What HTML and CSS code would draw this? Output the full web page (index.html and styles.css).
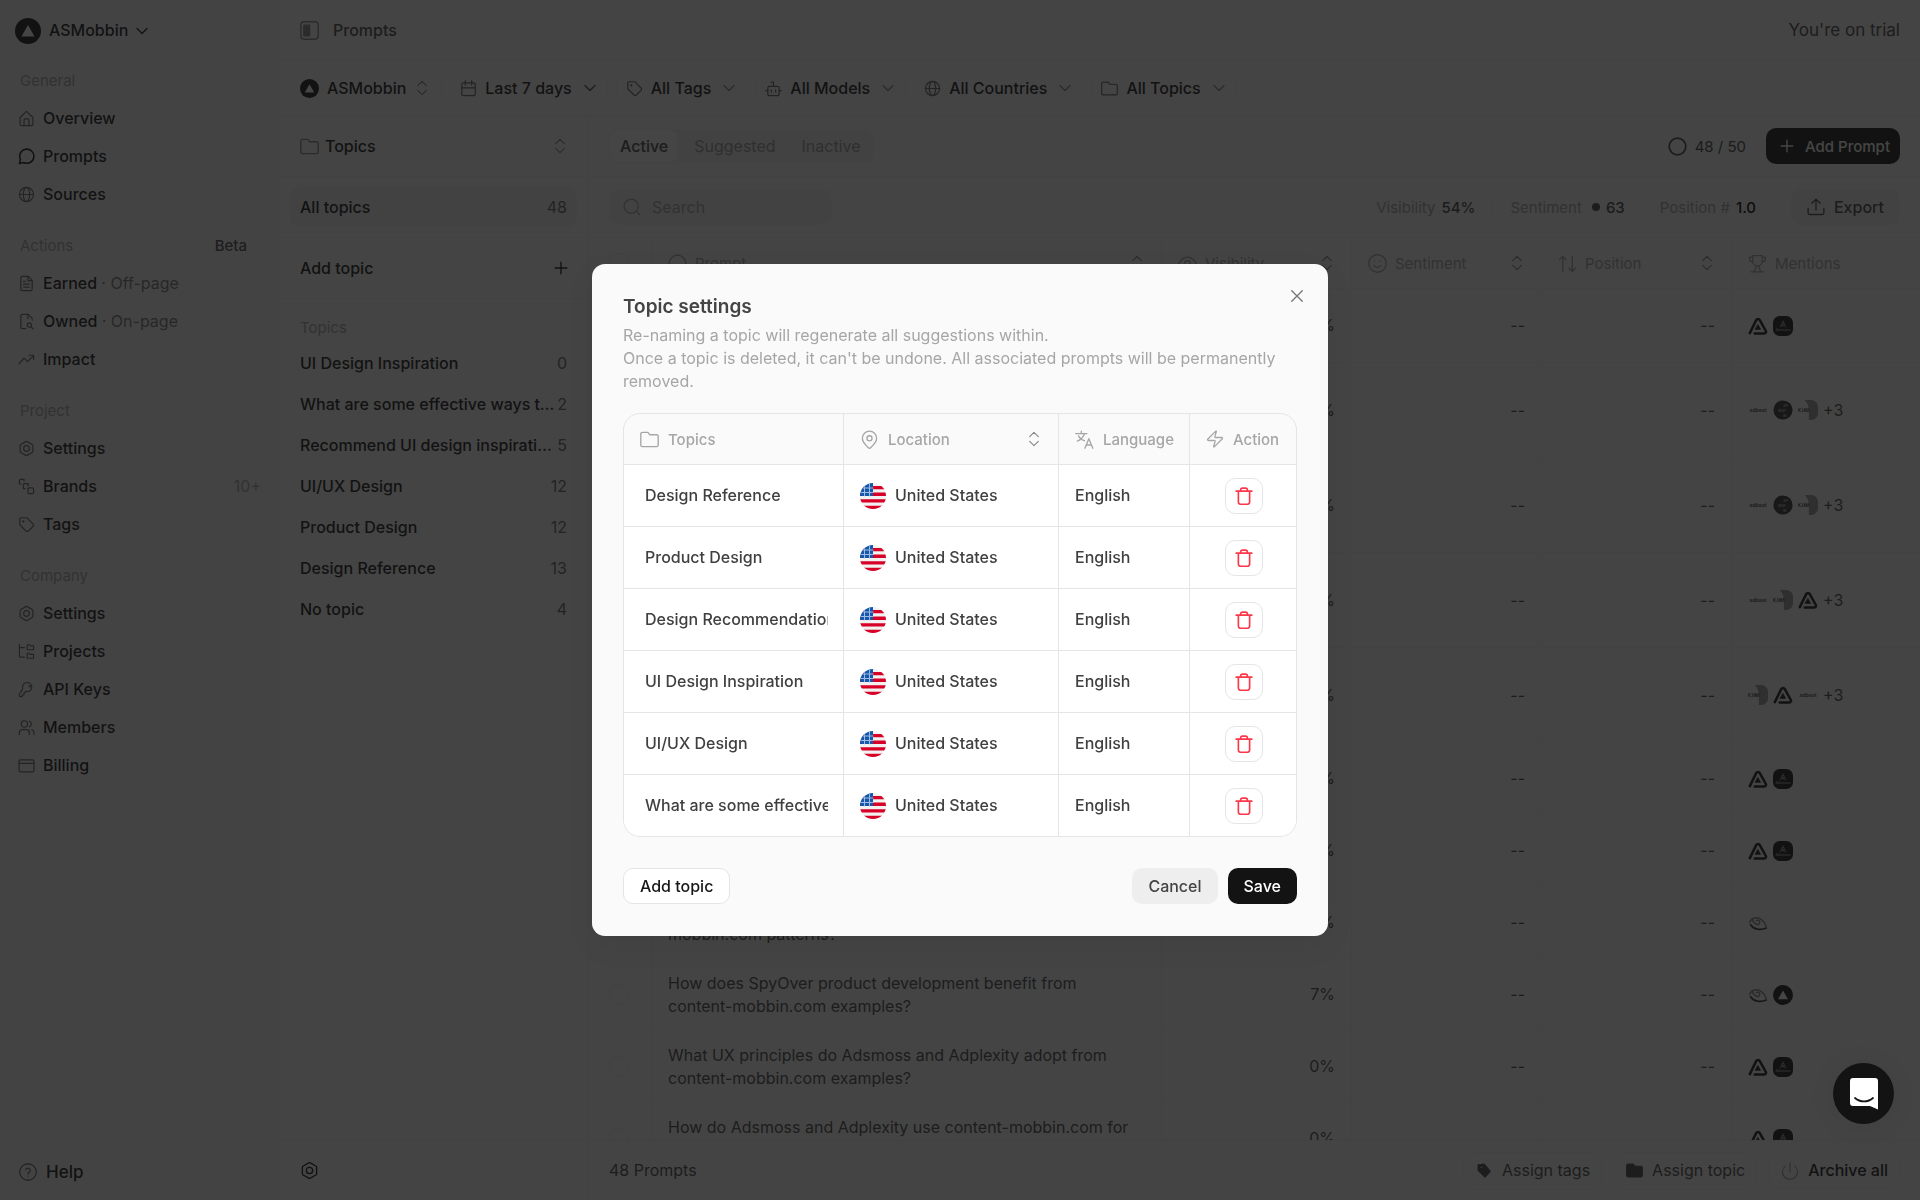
FILE: index.html
```html
<!DOCTYPE html>
<html lang="en">
<head>
<meta charset="utf-8">
<meta name="viewport" content="width=device-width, initial-scale=1">
<title>Prompts</title>
<link rel="stylesheet" href="styles.css">
</head>
<body>
<svg class="sprite" aria-hidden="true">
  <symbol id="home" viewBox="0 0 24 24"><path d="M3 10.500 12 2l9 8.500V20a2 2 0 0 1-2 2H5a2 2 0 0 1-2-2z"/><path d="M8.500 22v-8a1.500 1.500 0 0 1 1.500-1.500h4a1.500 1.500 0 0 1 1.500 1.500v8"/></symbol>
  <symbol id="chat" viewBox="0 0 24 24"><path d="M7.900 20.500A10 10 0 1 0 3.500 16.100L2 22z"/></symbol>
  <symbol id="globe" viewBox="0 0 24 24"><circle cx="12" cy="12" r="10"/><ellipse cx="12" cy="12" rx="4.500" ry="10"/><path d="M2 12h20"/></symbol>
  <symbol id="doc" viewBox="0 0 24 24"><path d="M14.500 2H6a2 2 0 0 0-2 2v16a2 2 0 0 0 2 2h12a2 2 0 0 0 2-2V7.500z"/><path d="M14 2v6h6M8 9h2M8 13h8M8 17h8"/></symbol>
  <symbol id="doc-search" viewBox="0 0 24 24"><path d="M20 10V7.500L14.500 2H6a2 2 0 0 0-2 2v16a2 2 0 0 0 2 2h5"/><path d="M14 2v6"/><circle cx="16" cy="17" r="3"/><path d="m18.300 19.300 3 3"/></symbol>
  <symbol id="trend" viewBox="0 0 24 24"><path d="m1.500 18 7-8 5 5L22 6.500"/><path d="M15.500 6H22v6.500"/></symbol>
  <symbol id="nut" viewBox="0 0 24 24"><path d="M21 16V8a2 2 0 0 0-1-1.700l-7-4a2 2 0 0 0-2 0l-7 4A2 2 0 0 0 3 8v8a2 2 0 0 0 1 1.700l7 4a2 2 0 0 0 2 0l7-4a2 2 0 0 0 1-1.700z"/><circle cx="12" cy="12" r="4"/></symbol>
  <symbol id="brands" viewBox="0 0 24 24"><rect x="14" y="14" width="8" height="8" rx="1.500"/><path d="M7.500 15V9.500A1.500 1.500 0 0 1 9 8h5.500M7.500 15H10M2 8.500v-5A1.500 1.500 0 0 1 3.500 2h5M2 8.500h2.500M8.500 2v2.500M14.500 8v3"/></symbol>
  <symbol id="tag" viewBox="0 0 24 24"><path d="M2.500 4v7.600a2 2 0 0 0 .6 1.400l8.200 8.200a2.400 2.400 0 0 0 3.400 0l6.500-6.500a2.400 2.400 0 0 0 0-3.400L13 3.100a2 2 0 0 0-1.400-.6H4A1.500 1.500 0 0 0 2.500 4z"/><circle cx="7.500" cy="7.500" r=".8" fill="currentColor"/></symbol>
  <symbol id="tag-solid" viewBox="0 0 24 24"><path fill="currentColor" fill-rule="evenodd" d="M3 4v7.600l9.700 9.600 7.500-7.900L11.600 3zM7.500 5.700a1.800 1.800 0 1 1 0 3.600 1.800 1.800 0 0 1 0-3.600z"/></symbol>
  <symbol id="tree" viewBox="0 0 24 24"><path d="M2 2v16a2 2 0 0 0 2 2h5M2 6.500h7"/><path d="M13 9.500v-7h3l1.500 1.500H22v5.500zM13 21.500v-7h3l1.500 1.500H22v5.500z"/></symbol>
  <symbol id="key" viewBox="0 0 24 24"><path d="M2.600 17.400A2 2 0 0 0 2 18.800V21a1 1 0 0 0 1 1h3v-2.500h2.500V17l2.300-2.300a6.500 6.500 0 1 0-4-4z"/><circle cx="16.500" cy="7.500" r=".8" fill="currentColor"/></symbol>
  <symbol id="users" viewBox="0 0 24 24"><circle cx="9" cy="7" r="4.500"/><path d="M2 22v-3a4 4 0 0 1 4-4h6a4 4 0 0 1 4 4v3M16 2.800a4.500 4.500 0 0 1 0 8.400M22.500 22v-3a4 4 0 0 0-3-3.900"/></symbol>
  <symbol id="card" viewBox="0 0 24 24"><rect x="1.500" y="4" width="21" height="17" rx="2"/><path d="M1.500 9h21"/></symbol>
  <symbol id="help" viewBox="0 0 24 24"><circle cx="12" cy="12" r="11"/><path d="M9 9a3.100 3.100 0 0 1 6 1c0 2-3 2.700-3 4.500"/><path d="M12 17.500v.1"/></symbol>
  <symbol id="down" viewBox="0 0 24 24"><path d="m2 7 10 10 10-10"/></symbol>
  <symbol id="sort" viewBox="0 0 24 24"><path d="m5.500 8.500 6.500-6.500 6.500 6.500M5.500 15.500l6.500 6.500 6.500-6.500"/></symbol>
  <symbol id="calendar" viewBox="0 0 24 24"><rect x="2.500" y="4" width="19" height="18" rx="2"/><path d="M7.500 1v6M16.500 1v6M2.500 11h19"/></symbol>
  <symbol id="bot" viewBox="0 0 24 24"><rect x="4" y="9" width="16" height="13" rx="2"/><path d="M12 9V3H8.500M1 15h3M20 15h3M9 14v3M15 14v3"/></symbol>
  <symbol id="folder" viewBox="0 0 24 24"><path d="M21 21a2 2 0 0 0 2-2V8a2 2 0 0 0-2-2h-8.500L10 3H3a2 2 0 0 0-2 2v14a2 2 0 0 0 2 2z"/></symbol>
  <symbol id="plus" viewBox="0 0 24 24"><path d="M12 2v20M2 12h20"/></symbol>
  <symbol id="search" viewBox="0 0 24 24"><circle cx="11" cy="11" r="9.500"/><path d="m18 18 4.500 4.500"/></symbol>
  <symbol id="upload" viewBox="0 0 24 24"><path d="M1.500 14v6a2 2 0 0 0 2 2h17a2 2 0 0 0 2-2v-6M6.500 7 12 1.500 17.500 7M12 1.500V16"/></symbol>
  <symbol id="smile" viewBox="0 0 24 24"><circle cx="12" cy="12" r="11"/><path d="M7.500 14.500a5.500 5.500 0 0 0 9 0M8.500 8.500v.2M15.500 8.500v.2"/></symbol>
  <symbol id="updown" viewBox="0 0 24 24"><path d="M6 22V3M2 7l4-4 4 4M18 3v19M14 18l4 4 4-4"/></symbol>
  <symbol id="trophy" viewBox="0 0 24 24"><path d="M6 2h12v7a6 6 0 0 1-12 0zM6 4H2v2a4 4 0 0 0 4 4M18 4h4v2a4 4 0 0 1-4 4M10.500 15 8 22.500M13.500 15l2.500 7.500M4 22.500h16"/></symbol>
  <symbol id="eye" viewBox="0 0 24 24"><path d="M1 12S5 4 12 4s11 8 11 8-4 8-11 8S1 12 1 12z"/><circle cx="12" cy="12" r="3.500"/></symbol>
  <symbol id="pin" viewBox="0 0 24 24"><path d="M21 10.500c0 5.500-5.500 10-8 12.200a1.500 1.500 0 0 1-2 0C8.500 20.500 3 16 3 10.500a9 9 0 0 1 18 0z"/><circle cx="12" cy="10.500" r="3.200"/></symbol>
  <symbol id="lang" viewBox="0 0 24 24"><path d="M1 4.500h14M8 1.500v3M12 4.500c-1.500 4.500-5 8-9 9.500M4.500 7.500c1.500 3 4 5 7.500 6M12.500 23l5-12 5 12M14.500 19h6"/></symbol>
  <symbol id="zap" viewBox="0 0 24 24"><path d="M3 14a1 1 0 0 1-.8-1.600L13 1.500c.3-.3.900 0 .8.500l-2 6.800A1 1 0 0 0 12.800 10H21a1 1 0 0 1 .8 1.600L11 22.500c-.3.300-.9 0-.8-.5l2-6.800a1 1 0 0 0-1-1.200z"/></symbol>
  <symbol id="trash" viewBox="0 0 24 24"><path d="M1.500 5.500h21M4.500 5.500V20a3 3 0 0 0 3 3h9a3 3 0 0 0 3-3V5.500M7.500 5.500V4a2.500 2.500 0 0 1 2.500-2.500h4A2.500 2.500 0 0 1 16.500 4v1.500"/></symbol>
  <symbol id="close" viewBox="0 0 24 24"><path d="M3 3l18 18M21 3 3 21"/></symbol>
  <symbol id="power" viewBox="0 0 24 24"><path d="M12 1v12M18.500 5.500a10 10 0 1 1-13 0"/></symbol>
  <symbol id="panel" viewBox="0 0 24 24"><rect x="1" y="1" width="22" height="22" rx="4"/><rect x="4" y="4.500" width="9" height="15" rx="1.500" fill="currentColor" stroke="none"/></symbol>
  <symbol id="ring" viewBox="0 0 24 24"><circle cx="12" cy="12" r="10.500"/></symbol>
  <symbol id="as" viewBox="0 0 24 24"><circle cx="12" cy="12" r="12" fill="#171717" stroke="none"/><path d="M12 6.500 18 17H6z" fill="#fff" stroke="none"/></symbol>
  <symbol id="tri" viewBox="0 0 24 24"><path d="M2.200 20.500 9.800 5a2.500 2.500 0 0 1 4.400 0l7.200 13a2 2 0 0 1-1.800 3H8" fill="none" stroke="#171717" stroke-width="3"/><path d="M12 10.500 15 16H9z" fill="#171717" stroke="#171717" stroke-width="1"/></symbol>
  <symbol id="moss" viewBox="0 0 24 24"><rect width="24" height="24" rx="8" fill="#171717" stroke="none"/><path d="M9 13 12 6l3 7M11 12l1-2 1 2" stroke="#888" stroke-width="1.300"/><text x="12" y="18.500" class="tiny" fill="#999" font-size="4">Adsmoss</text></symbol>
  <symbol id="beat" viewBox="0 0 24 24"><text x="12" y="14.500" class="tiny" fill="#555" font-size="6">adbeat</text></symbol>
  <symbol id="may" viewBox="0 0 24 24"><circle cx="12" cy="12" r="11.500" fill="#333" stroke="none"/><g class="tiny" fill="#aaa" font-size="4"><text x="15" y="8">AP</text><text x="11" y="14">MAY</text><text x="14" y="20">IN</text></g></symbol>
  <symbol id="half" viewBox="0 0 24 24"><path d="M8 0h8a8 8 0 0 1 8 8v8a8 8 0 0 1-8 8h-3V12C13 7 11 3 8 0z" fill="#999" stroke="none"/><path d="M1 14v-4M1 12l2.500-2M1 12l2.500 2M5 14l1-4M7 14l1.500-4v4l2-4v4M11.500 14l1-4 1 4" stroke="#555" stroke-width="1"/></symbol>
  <symbol id="spy" viewBox="0 0 24 24"><path d="M2 11c2-5 9-7 14-3 2 1.500 4 3 6 8M5 7c2 7 9 9 9 4 0-2-2-3-4-2" stroke="#888" stroke-width="1.800"/><path d="M3 14c4 6 12 7 19 4" stroke="#333" stroke-width="2"/></symbol>
  <symbol id="flag" viewBox="0 0 26 26"><clipPath id="fc"><circle cx="13" cy="13" r="13"/></clipPath><g clip-path="url(#fc)" stroke="none"><rect width="26" height="26" fill="#f1f1f1"/><path d="M0 3h26v3.300H0zM0 9.600h26v3.300H0zM0 16.200h26v3.300H0zM0 22.800h26V26H0z" fill="#d80027"/><rect width="13" height="13" fill="#1457ad"/><path d="M4.500 0v13M9.500 0v13M0 5h13M0 9.500h13" stroke="#a9c4e6" stroke-width="1" stroke-dasharray="1.500 1"/></g></symbol>
</svg>

<div class="app">
  <aside class="sidebar">
    <button class="account"><svg class="i26"><use href="#as"/></svg>ASMobbin<svg class="i12"><use href="#down"/></svg></button>
    <nav>
      <section><h2>General</h2>
        <a href="#"><svg><use href="#home"/></svg>Overview</a>
        <a href="#" class="on"><svg><use href="#chat"/></svg>Prompts</a>
        <a href="#"><svg><use href="#globe"/></svg>Sources</a></section>
      <section><h2>Actions <span>Beta</span></h2>
        <a href="#"><svg><use href="#doc"/></svg><span>Earned <em>· Off-page</em></span></a>
        <a href="#"><svg><use href="#doc-search"/></svg><span>Owned <em>· On-page</em></span></a>
        <a href="#"><svg><use href="#trend"/></svg>Impact</a></section>
      <section><h2>Project</h2>
        <a href="#"><svg><use href="#nut"/></svg>Settings</a>
        <a href="#"><svg><use href="#brands"/></svg>Brands<small>10+</small></a>
        <a href="#"><svg><use href="#tag"/></svg>Tags</a></section>
      <section><h2>Company</h2>
        <a href="#"><svg><use href="#nut"/></svg>Settings</a>
        <a href="#"><svg><use href="#tree"/></svg>Projects</a>
        <a href="#"><svg><use href="#key"/></svg>API Keys</a>
        <a href="#"><svg><use href="#users"/></svg>Members</a>
        <a href="#"><svg><use href="#card"/></svg>Billing</a></section>
    </nav>
    <a href="#" class="help"><svg class="i18"><use href="#help"/></svg>Help</a>
  </aside>

  <div class="page">
    <header class="topbar"><svg class="i20"><use href="#panel"/></svg><h1>Prompts</h1><span class="trial">You're on trial</span></header>
    <div class="filters">
      <button><svg class="i20"><use href="#as"/></svg>ASMobbin<svg class="sort"><use href="#sort"/></svg></button>
      <button><svg><use href="#calendar"/></svg>Last 7 days<svg class="i12 dark"><use href="#down"/></svg></button>
      <button><svg><use href="#tag"/></svg>All Tags<svg class="i12"><use href="#down"/></svg></button>
      <button><svg><use href="#bot"/></svg>All Models<svg class="i12"><use href="#down"/></svg></button>
      <button><svg><use href="#globe"/></svg>All Countries<svg class="i12"><use href="#down"/></svg></button>
      <button><svg><use href="#folder"/></svg>All Topics<svg class="i12"><use href="#down"/></svg></button>
    </div>
    <div class="body">
      <section class="topics">
        <button class="bar topics-head"><svg class="i20"><use href="#folder"/></svg>Topics<svg class="sort"><use href="#sort"/></svg></button>
        <div class="bar all-wrap"><a href="#" class="all">All topics<span>48</span></a></div>
        <button class="bar add">Add topic<svg class="i14"><use href="#plus"/></svg></button>
        <h2>Topics</h2>
        <ul>
          <li><a href="#"><b>UI Design Inspiration</b><span>0</span></a></li>
          <li><a href="#"><b>What are some effective ways to find</b><span>2</span></a></li>
          <li><a href="#"><b>Recommend UI design inspiration</b><span>5</span></a></li>
          <li><a href="#"><b>UI/UX Design</b><span>12</span></a></li>
          <li><a href="#"><b>Product Design</b><span>12</span></a></li>
          <li><a href="#"><b>Design Reference</b><span>13</span></a></li>
          <li><a href="#"><b>No topic</b><span>4</span></a></li>
        </ul>
        <footer><button aria-label="Topic settings"><svg class="i20"><use href="#nut"/></svg></button></footer>
      </section>

      <main class="prompts">
        <div class="bar">
          <div class="tabs"><button class="on">Active</button><button>Suggested</button><button>Inactive</button></div>
          <span class="quota"><svg class="i20"><use href="#ring"/></svg>48 / 50</span>
          <button class="add-prompt"><svg class="i14"><use href="#plus"/></svg>Add Prompt</button>
        </div>
        <div class="bar">
          <label class="search"><svg class="i18"><use href="#search"/></svg><input type="search" placeholder="Search" aria-label="Search"></label>
          <div class="stats"><span>Visibility <b>54%</b></span><span>Sentiment <i></i><b>63</b></span><span>Position # <b class="ink">1.0</b></span></div>
          <button class="export"><svg class="i18"><use href="#upload"/></svg>Export</button>
        </div>
        <div class="scroller">
          <table class="list">
            <colgroup><col class="c-check"><col><col class="c-num"><col class="c-num"><col class="c-num"><col class="c-last"></colgroup>
            <thead><tr>
              <th><input type="checkbox" aria-label="Select all"></th>
              <th><div><svg class="i20"><use href="#ring"/></svg>Prompt<svg class="sort"><use href="#sort"/></svg></div></th>
              <th><div><svg class="i20"><use href="#eye"/></svg>Visibility<svg class="sort"><use href="#sort"/></svg></div></th>
              <th><div><svg class="i20"><use href="#smile"/></svg>Sentiment<svg class="sort"><use href="#sort"/></svg></div></th>
              <th><div><svg class="i20"><use href="#updown"/></svg>Position<svg class="sort"><use href="#sort"/></svg></div></th>
              <th><div><svg class="i20"><use href="#trophy"/></svg>Mentions</div></th>
            </tr></thead>
            <tbody>
              <tr><td></td><td></td><td>0%</td><td>--</td><td>--</td><td><div><svg><use href="#tri"/></svg><svg><use href="#moss"/></svg></div></td></tr>
              <tr class="tall"><td></td><td></td><td>0%</td><td>--</td><td>--</td><td><div><svg><use href="#beat"/></svg><svg><use href="#may"/></svg><svg><use href="#half"/></svg>+3</div></td></tr>
              <tr class="tall"><td></td><td></td><td>0%</td><td>--</td><td>--</td><td><div><svg><use href="#beat"/></svg><svg><use href="#may"/></svg><svg><use href="#half"/></svg>+3</div></td></tr>
              <tr class="tall"><td></td><td></td><td>0%</td><td>--</td><td>--</td><td><div><svg><use href="#beat"/></svg><svg><use href="#half"/></svg><svg><use href="#tri"/></svg>+3</div></td></tr>
              <tr class="tall"><td></td><td></td><td>0%</td><td>--</td><td>--</td><td><div><svg><use href="#half"/></svg><svg><use href="#tri"/></svg><svg><use href="#beat"/></svg>+3</div></td></tr>
              <tr><td></td><td></td><td>0%</td><td>--</td><td>--</td><td><div><svg><use href="#tri"/></svg><svg><use href="#moss"/></svg></div></td></tr>
              <tr><td></td><td></td><td>0%</td><td>--</td><td>--</td><td><div><svg><use href="#tri"/></svg><svg><use href="#moss"/></svg></div></td></tr>
              <tr><td></td><td><br>mobbin.com patterns?</td><td>0%</td><td>--</td><td>--</td><td><div><svg><use href="#spy"/></svg></div></td></tr>
              <tr><td><input type="checkbox" aria-label="Select prompt"></td><td>How does SpyOver product development benefit from<br>content-mobbin.com examples?</td><td>7%</td><td>--</td><td>--</td><td><div><svg><use href="#spy"/></svg><svg><use href="#as"/></svg></div></td></tr>
              <tr><td><input type="checkbox" aria-label="Select prompt"></td><td>What UX principles do Adsmoss and Adplexity adopt from<br>content-mobbin.com examples?</td><td>0%</td><td>--</td><td>--</td><td><div><svg><use href="#tri"/></svg><svg><use href="#moss"/></svg></div></td></tr>
              <tr><td><input type="checkbox" aria-label="Select prompt"></td><td>How do Adsmoss and Adplexity use content-mobbin.com for<br>&nbsp;</td><td>0%</td><td></td><td></td><td><div><svg><use href="#tri"/></svg><svg><use href="#moss"/></svg></div></td></tr>
            </tbody>
          </table>
        </div>
        <footer><span>48 Prompts</span>
          <button><svg><use href="#tag-solid"/></svg>Assign tags</button>
          <button class="solid"><svg><use href="#folder"/></svg>Assign topic</button>
          <button class="archive"><svg class="i18"><use href="#power"/></svg>Archive all</button>
        </footer>
      </main>
    </div>
  </div>
</div>

<div class="overlay">
  <div class="modal" role="dialog" aria-modal="true" aria-labelledby="modal-title">
    <button class="close" aria-label="Close"><svg class="i14"><use href="#close"/></svg></button>
    <h2 id="modal-title">Topic settings</h2>
    <p>Re-naming a topic will regenerate all suggestions within.<br>Once a topic is deleted, it can't be undone. All associated prompts will be permanently removed.</p>
    <table class="grid">
      <colgroup><col class="g-topic"><col><col class="g-lang"><col class="g-act"></colgroup>
      <thead><tr>
        <th><div><svg class="i20"><use href="#folder"/></svg>Topics</div></th>
        <th><div><svg class="i20"><use href="#pin"/></svg>Location<svg class="sort"><use href="#sort"/></svg></div></th>
        <th><div><svg class="i20"><use href="#lang"/></svg>Language</div></th>
        <th><div><svg class="i18"><use href="#zap"/></svg>Action</div></th>
      </tr></thead>
      <tbody>
        <tr><td><input type="text" aria-label="Topic name" value="Design Reference"></td><td><div><svg class="i26"><use href="#flag"/></svg>United States</div></td><td>English</td><td><button aria-label="Delete topic"><svg class="i18"><use href="#trash"/></svg></button></td></tr>
        <tr><td><input type="text" aria-label="Topic name" value="Product Design"></td><td><div><svg class="i26"><use href="#flag"/></svg>United States</div></td><td>English</td><td><button aria-label="Delete topic"><svg class="i18"><use href="#trash"/></svg></button></td></tr>
        <tr><td><input type="text" aria-label="Topic name" value="Design Recommendations"></td><td><div><svg class="i26"><use href="#flag"/></svg>United States</div></td><td>English</td><td><button aria-label="Delete topic"><svg class="i18"><use href="#trash"/></svg></button></td></tr>
        <tr><td><input type="text" aria-label="Topic name" value="UI Design Inspiration"></td><td><div><svg class="i26"><use href="#flag"/></svg>United States</div></td><td>English</td><td><button aria-label="Delete topic"><svg class="i18"><use href="#trash"/></svg></button></td></tr>
        <tr><td><input type="text" aria-label="Topic name" value="UI/UX Design"></td><td><div><svg class="i26"><use href="#flag"/></svg>United States</div></td><td>English</td><td><button aria-label="Delete topic"><svg class="i18"><use href="#trash"/></svg></button></td></tr>
        <tr><td><input type="text" aria-label="Topic name" value="What are some effective ways"></td><td><div><svg class="i26"><use href="#flag"/></svg>United States</div></td><td>English</td><td><button aria-label="Delete topic"><svg class="i18"><use href="#trash"/></svg></button></td></tr>
      </tbody>
    </table>
    <div class="actions"><button class="add-topic">Add topic</button><button class="cancel">Cancel</button><button class="save">Save</button></div>
  </div>
</div>

<button class="messenger" aria-label="Open messenger"><svg viewBox="0 0 28 32"><path d="M3 0h22a3 3 0 0 1 3 3v28.500L20 28H3a3 3 0 0 1-3-3V3a3 3 0 0 1 3-3z" fill="#fff" stroke="none"/><path d="M5 20c5 4.500 13 4.500 18 0" fill="none" stroke="#131313" stroke-width="1.800"/></svg></button>
</body>
</html>
```

FILE: styles.css
```css
:root {
  --ink: #171717;
  --text: #4a4a4a;
  --soft: #888;
  --faint: #a6a6a6;
  --line: #f1f1f1;
  --bg: #fafafa;
}
* { box-sizing: border-box; }
body {
  margin: 0;
  background: var(--bg);
  color: var(--ink);
  font: 500 16px/23px Inter, "Liberation Sans", sans-serif;
}
h1, h2, p, ul { margin: 0; padding: 0; font: inherit; }
ul { list-style: none; }
b { font-weight: 500; }
a { color: inherit; text-decoration: none; }
button { font: inherit; color: inherit; border: 0; background: none; padding: 0; margin: 0; }
button, a, label, footer { display: flex; align-items: center; }
svg {
  flex: none;
  width: 17px;
  height: 17px;
  fill: none;
  stroke: currentColor;
  stroke-width: 1.7;
  stroke-linecap: round;
  stroke-linejoin: round;
}
.sprite { position: absolute; width: 0; height: 0; }
.tiny { font-family: Inter, sans-serif; font-weight: 700; stroke: none; text-anchor: middle; }
.i12 { width: 12px; height: 12px; stroke-width: 2.6; }
.i14 { width: 14px; height: 14px; stroke-width: 2.4; }
.i18 { width: 18px; height: 18px; }
.i20 { width: 19px; height: 19px; }
.i26 { width: 26px; height: 26px; }
.sort { width: 16px; height: 16px; margin-left: auto; color: var(--soft); }

.app { display: flex; height: 100vh; overflow: hidden; }

/* Sidebar */
.sidebar { width: 280px; flex: none; display: flex; flex-direction: column; background: #f7f7f7; }
.account { height: 61px; padding-left: 15px; gap: 8px; }
nav { flex: 1; }
nav section { padding-bottom: 13px; }
nav h2 { display: flex; justify-content: space-between; align-items: center; height: 38px; padding: 0 33px 0 20px; font-size: 15px; font-weight: 400; color: var(--faint); }
nav h2 span { color: var(--text); font-weight: 500; }
nav a { height: 38px; padding: 0 19px 0 18px; gap: 8px; }
nav a svg { color: #666; }
nav a.on svg { color: var(--ink); stroke-width: 2.2; }
nav em { font-style: normal; font-weight: 400; color: #777; }
nav small { margin-left: auto; font-size: 16px; font-weight: 400; color: var(--faint); }
.help { height: 56px; padding-left: 19px; gap: 9px; font-size: 17px; }
.help svg { color: #666; }

/* Page frame */
.page { flex: 1; min-width: 0; display: flex; flex-direction: column; }
.topbar { display: flex; align-items: center; height: 61px; padding: 0 20px; gap: 14px; border-bottom: 1px solid var(--line); color: var(--text); }
.topbar svg { color: var(--soft); }
.trial { margin-left: auto; font-size: 17px; font-weight: 400; }
.filters { display: flex; align-items: center; gap: 8px; height: 55px; padding: 0 10px; border-bottom: 1px solid var(--line); }
.filters button { height: 36px; padding: 0 11px 0 9px; gap: 8px; border: 1px solid var(--line); border-radius: 12px; }
.filters button svg:first-child { color: #666; }
.filters .i12 { margin-left: 4px; color: var(--soft); }
.filters .dark { color: var(--text); }
.body { flex: 1; min-height: 0; display: flex; }
.bar { display: flex; align-items: center; width: 100%; height: 61px; padding: 0 20px; border-bottom: 1px solid var(--line); }
.body footer { height: 60px; padding: 0 20px; border-top: 1px solid var(--line); margin-top: auto; flex: none; }

/* Topic list */
.topics { width: 309px; flex: none; display: flex; flex-direction: column; border-right: 1px solid var(--line); }
.topics-head { gap: 6px; }
.topics-head .i20 { color: var(--soft); }
.topics .bar { padding-right: 20px; }
.topics .all-wrap { padding: 0 11px 0 10px; }
.all { flex: 1; height: 40px; padding: 0 10px; border-radius: 10px; background: #efefef; justify-content: space-between; }
.all span, .topics li span { color: #666; font-weight: 400; }
.add { justify-content: space-between; }
.topics h2 { padding: 17px 20px 4px; font-size: 15px; font-weight: 400; color: var(--faint); }
.topics li a { height: 41px; padding: 0 21px 0 20px; gap: 2px; justify-content: space-between; }
.topics li b { overflow: hidden; white-space: nowrap; text-overflow: ellipsis; }

/* Prompt list */
.prompts { flex: 1; min-width: 0; display: flex; flex-direction: column; }
.tabs { display: flex; height: 34px; border-radius: 10px; background: #f2f2f2; }
.tabs button { padding: 0 13px; color: #999; font-weight: 400; }
.tabs .on { margin-right: 2px; padding: 0 10px; color: var(--text); background: #fcfcfc; border: 1px solid #f2f2f2; border-radius: 10px; font-weight: 500; }
.quota { display: flex; align-items: center; gap: 8px; margin-left: auto; font-size: 15px; font-weight: 400; color: #444; }
.quota svg { stroke-width: 2.2; }
.add-prompt { height: 36px; margin-left: 20px; padding: 0 10px 0 14px; gap: 11px; border-radius: 10px; background: var(--ink); color: #fff; font-size: 15px; }
.search { width: 223px; height: 36px; padding: 0 14px; gap: 11px; border-radius: 10px; background: #f2f2f2; color: var(--faint); }
.search input { width: 100%; border: 0; outline: 0; padding: 0; background: none; font: inherit; font-weight: 400; }
.search input::placeholder { color: var(--faint); }
.stats { display: flex; margin-left: auto; color: var(--faint); font-size: 15px; font-weight: 400; }
.stats span { display: flex; align-items: center; gap: 6px; padding: 0 17px; border-right: 1px solid var(--line); }
.stats b { color: #444; }
.stats .ink { color: #000; }
.stats i { width: 8px; height: 8px; margin-left: 4px; border-radius: 50%; background: #444; }
.export { height: 36px; margin-left: 17px; padding: 0 16px; gap: 9px; border-radius: 10px; background: #f2f2f2; color: #444; }
.scroller { flex: 1; min-height: 0; overflow: hidden; }
.list { width: 100%; table-layout: fixed; border-collapse: separate; border-spacing: 0; color: var(--text); font-weight: 400; }
.c-check { width: 63px; }
.c-num { width: 190px; }
.c-last { width: 188px; }
.list th, .list td { height: 72px; padding: 0 16px; border-bottom: 1px solid var(--line); border-right: 1px solid var(--line); text-align: right; }
.list th { height: 51px; color: var(--faint); font-size: 15px; font-weight: 400; }
.list tr > :last-child { border-right: 0; }
.list th:first-child, .list td:first-child { padding-left: 20px; text-align: left; }
.list td:nth-child(2) { text-align: left; }
.list .tall td { height: 95px; }
.list th div, .list td div { display: flex; align-items: center; gap: 8px; }
.list td div { gap: 5px; }
.list td svg { width: 20px; height: 20px; }
.list tbody tr:first-child td { height: 74px; }
.list input { appearance: none; display: block; width: 20px; height: 20px; margin: 0; border: 1px solid #eee; border-radius: 6px; }
.prompts footer { gap: 11px; color: var(--text); }
.prompts footer span { margin-right: auto; font-weight: 400; }
.prompts footer button { height: 38px; padding: 0 11px 0 12px; gap: 9px; border: 1px solid var(--line); border-radius: 12px; font-weight: 400; }
.prompts footer .solid svg { fill: currentColor; }
.prompts footer .archive { height: 36px; color: var(--ink); font-weight: 500; }
.archive svg { color: var(--faint); }

/* Dialog */
.overlay { position: fixed; inset: 0; display: grid; place-items: center; background: rgba(17, 17, 17, .78); }
.modal { position: relative; width: 736px; padding: 31px 31px 32px; border-radius: 13px; background: var(--bg); box-shadow: 0 10px 30px rgba(0, 0, 0, .06); }
.close { position: absolute; top: 25px; right: 24px; color: #777; }
.modal h2 { font-size: 19px; line-height: 24px; font-weight: 600; color: #444; margin-bottom: 5px; }
.modal p { color: var(--faint); font-weight: 400; margin-bottom: 20px; }
.grid { width: 100%; table-layout: fixed; border-collapse: separate; border-spacing: 0; border: 1px solid #e5e5e5; border-radius: 17px; overflow: hidden; color: #404040; font-weight: 400; }
.g-topic { width: 220px; }
.g-lang { width: 131px; }
.g-act { width: 106px; }
.grid th, .grid td { padding: 0 16px; text-align: left; border-right: 1px solid #e5e5e5; }
.grid th:last-child, .grid td:last-child { border-right: 0; }
.grid th { height: 50px; color: var(--faint); font-size: 15px; font-weight: 500; }
.grid th:last-child { padding-right: 0; }
.grid td { height: 62px; padding-right: 15px; background: #fff; border-top: 1px solid #e5e5e5; font-weight: 500; }
.grid th div, .grid td div { display: flex; align-items: center; gap: 9px; }
.grid input { display: block; width: 100%; padding: 0 0 0 5px; border: 0; outline: 0; background: none; font: inherit; color: inherit; }
.grid button { width: 38px; height: 36px; margin: auto; justify-content: center; border: 1px solid #e5e5e5; border-radius: 10px; color: #fb3748; }
.grid button svg { stroke-width: 2.2; }
.actions { display: flex; gap: 10px; margin-top: 31px; }
.actions button { height: 36px; padding: 0 16px; border-radius: 10px; }
.actions .add-topic { margin-right: auto; border: 1px solid #e5e5e5; background: #fff; }
.actions .cancel { background: #eee; color: #444; }
.actions .save { background: #131313; color: #fff; }

.messenger { position: fixed; right: 26px; bottom: 76px; width: 61px; height: 61px; justify-content: center; border-radius: 50%; background: #131313; box-shadow: 0 2px 30px rgba(0, 0, 0, .06); }
.messenger svg { width: 28px; height: 32px; }
```
